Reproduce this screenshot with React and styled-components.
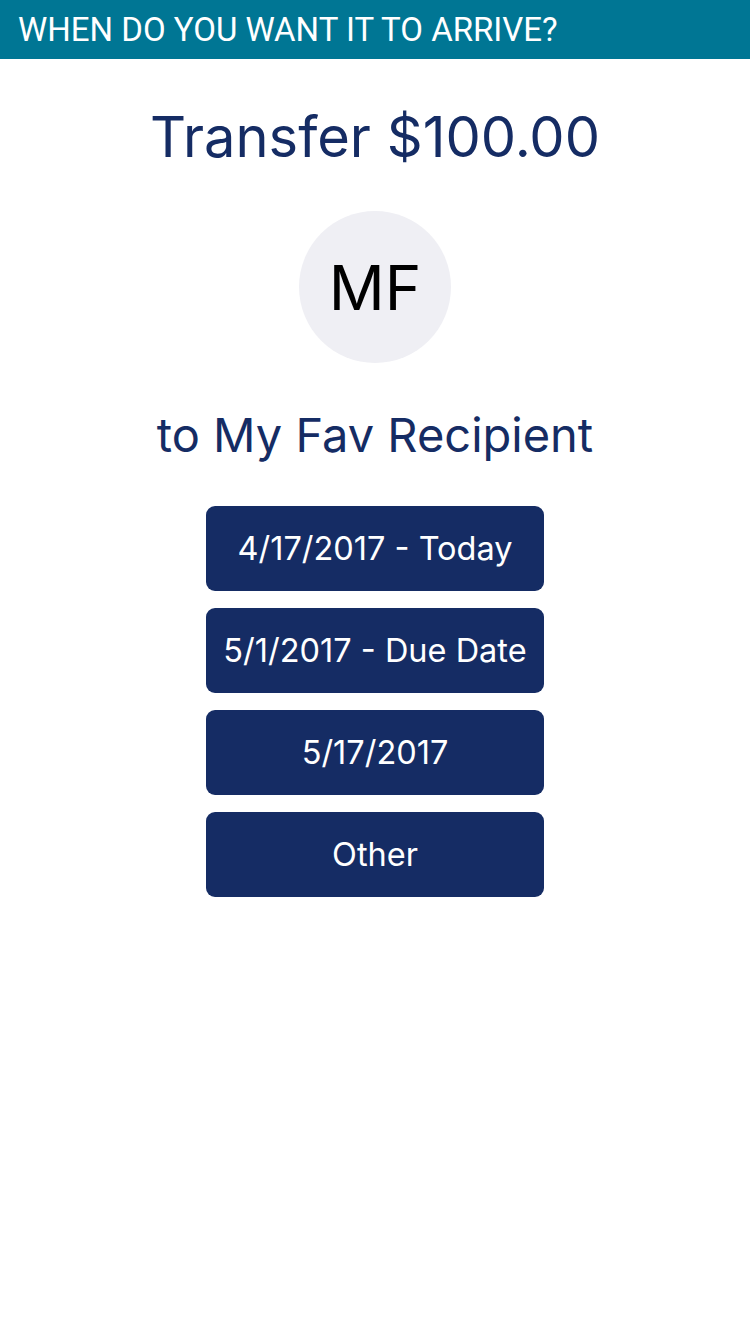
import React from "react";
import styled, { createGlobalStyle } from "styled-components";

const Global = createGlobalStyle`
  html, body { margin: 0; padding: 0; background: #fff; }
  body { font-family: Inter, "Noto Sans", sans-serif; }
`;

const Page = styled.div`
  width: 750px;
  min-height: 1334px;
  background: #fff;
  display: flex;
  flex-direction: column;
`;

const Header = styled.div`
  height: 59px;
  background: #007694;
  color: #fff;
  font-family: Roboto, sans-serif;
  font-size: 33px;
  display: flex;
  align-items: center;
  padding-left: 18px;
  box-sizing: border-box;
`;

const Body = styled.div`
  display: flex;
  flex-direction: column;
  align-items: center;
`;

const Title = styled.h1`
  margin: 43px 0 0;
  font-weight: 400;
  font-size: 56px;
  line-height: 70px;
  color: #152c64;
`;

const Avatar = styled.div`
  margin-top: 39px;
  width: 152px;
  height: 152px;
  border-radius: 50%;
  background: #efeff4;
  display: flex;
  align-items: center;
  justify-content: center;
  font-size: 62px;
  color: #000;
`;

const Recipient = styled.div`
  margin-top: 41px;
  font-size: 47px;
  line-height: 62px;
  color: #152c64;
`;

const Options = styled.div`
  margin-top: 40px;
  display: flex;
  flex-direction: column;
  gap: 17px;
`;

const Option = styled.button`
  width: 338px;
  height: 85px;
  border: none;
  border-radius: 9px;
  background: #152c64;
  color: #fff;
  font-family: Inter, "Noto Sans", sans-serif;
  font-size: 32.5px;
  padding: 0;
`;

export default function App() {
  const options = ["4/17/2017 - Today", "5/1/2017 - Due Date", "5/17/2017", "Other"];
  return (
    <>
      <Global />
      <Page>
        <Header>WHEN DO YOU WANT IT TO ARRIVE?</Header>
        <Body>
          <Title>Transfer $100.00</Title>
          <Avatar>MF</Avatar>
          <Recipient>to My Fav Recipient</Recipient>
          <Options>
            {options.map((o) => (
              <Option key={o}>{o}</Option>
            ))}
          </Options>
        </Body>
      </Page>
    </>
  );
}
